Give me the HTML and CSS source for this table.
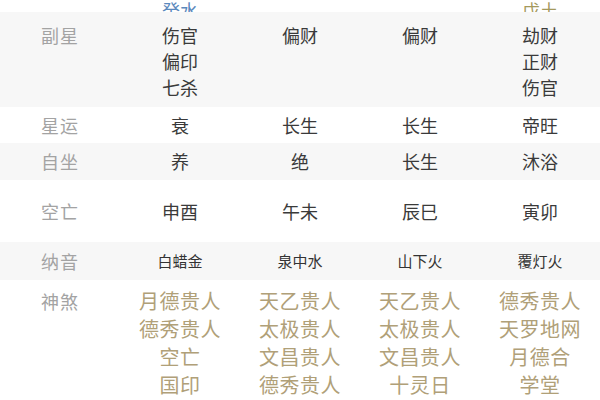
FILE: index.html
```html
<!DOCTYPE html>
<html lang="zh">
<head>
<meta charset="utf-8">
<link rel="stylesheet" href="styles.css">
</head>
<body>
<div class="table">
  <div class="row top">
    <div class="cell"></div>
    <div class="cell blue">癸水</div>
    <div class="cell"></div>
    <div class="cell"></div>
    <div class="cell olive">戊土</div>
  </div>
  <div class="row grey multi r-fx">
    <div class="cell label">副星</div>
    <div class="cell">伤官<br>偏印<br>七杀</div>
    <div class="cell">偏财</div>
    <div class="cell">偏财</div>
    <div class="cell">劫财<br>正财<br>伤官</div>
  </div>
  <div class="row r-xy">
    <div class="cell label">星运</div>
    <div class="cell">衰</div>
    <div class="cell">长生</div>
    <div class="cell">长生</div>
    <div class="cell">帝旺</div>
  </div>
  <div class="row grey r-zz">
    <div class="cell label">自坐</div>
    <div class="cell">养</div>
    <div class="cell">绝</div>
    <div class="cell">长生</div>
    <div class="cell">沐浴</div>
  </div>
  <div class="row r-kw">
    <div class="cell label">空亡</div>
    <div class="cell">申酉</div>
    <div class="cell">午未</div>
    <div class="cell">辰巳</div>
    <div class="cell">寅卯</div>
  </div>
  <div class="row grey r-ny">
    <div class="cell label">纳音</div>
    <div class="cell small">白蜡金</div>
    <div class="cell small">泉中水</div>
    <div class="cell small">山下火</div>
    <div class="cell small">覆灯火</div>
  </div>
  <div class="row multi r-ss">
    <div class="cell label">神煞</div>
    <div class="cell gold">月德贵人<br>德秀贵人<br>空亡<br>国印</div>
    <div class="cell gold">天乙贵人<br>太极贵人<br>文昌贵人<br>德秀贵人</div>
    <div class="cell gold">天乙贵人<br>太极贵人<br>文昌贵人<br>十灵日</div>
    <div class="cell gold">德秀贵人<br>天罗地网<br>月德合<br>学堂</div>
  </div>
</div>
</body>
</html>
```

FILE: styles.css
```css
html, body {
  margin: 0;
  padding: 0;
  background: #ffffff;
}
body {
  width: 600px;
  height: 400px;
  overflow: hidden;
  font-family: "Noto Sans CJK SC", "Noto Sans", sans-serif;
  color: #3a3a3a;
}
.table {
  display: flex;
  flex-direction: column;
}
.row {
  display: grid;
  grid-template-columns: repeat(5, 120px);
  align-items: center;
  font-size: 18px;
}
.cell {
  text-align: center;
}
.grey {
  background: #f7f7f7;
}
.label {
  color: #a3a3a3;
  letter-spacing: 1px;
}
.top {
  height: 12px;
  overflow: hidden;
  align-items: end;
  line-height: 20px;
}
.top .cell {
  margin-bottom: -1px;
}
.blue {
  color: #5b89bd;
}
.olive {
  color: #a4995c;
}
.multi {
  align-items: start;
}
.r-fx {
  height: 95px;
  box-sizing: border-box;
  padding-top: 10px;
  line-height: 26px;
}
.r-xy {
  height: 36px;
  line-height: 36px;
}
.r-zz {
  height: 37px;
  line-height: 37px;
}
.r-kw {
  height: 62px;
  line-height: 62px;
}
.r-ny {
  height: 38px;
  line-height: 38px;
}
.small {
  font-size: 15px;
  color: #333333;
}
.r-ss {
  height: 120px;
  box-sizing: border-box;
  padding-top: 7px;
  line-height: 28px;
}
.r-ss .label {
  font-size: 18px;
}
.gold {
  color: #b0a078;
  font-size: 20px;
  letter-spacing: 0.5px;
}
```
